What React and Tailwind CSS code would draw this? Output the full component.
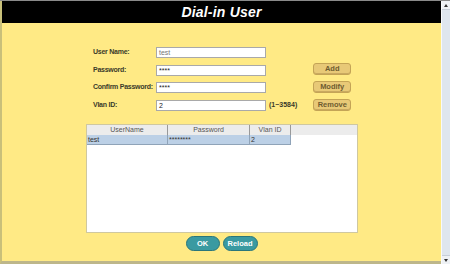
import React from "react";

const font = { fontFamily: '"Liberation Sans", Arial, sans-serif' };

function Field({ label, value, extra, gray }) {
  return (
    <div className="flex items-center h-[11px]">
      <div className="w-[63px] text-[7px] font-bold text-[#3a3a2a] whitespace-nowrap tracking-[-0.25px]">{label}</div>
      <div className={`w-[110px] h-[11px] bg-white border border-[#a9a9a9] px-[2px] text-[7px] leading-[9px] ${gray ? "text-[#777]" : "text-[#222]"}`}>
        {value}
      </div>
      {extra && <div className="ml-[3px] text-[7px] font-bold text-[#3a3a2a]">{extra}</div>}
    </div>
  );
}

function TanButton({ children }) {
  return (
    <button className="w-[38px] h-[12px] rounded-[3px] bg-[#e8c977] border border-[#c4a456] shadow-[inset_0_-1px_0_#c9a960] text-[7.5px] font-bold text-[#6e5c30] leading-[10px]">
      {children}
    </button>
  );
}

function TealButton({ children, w }) {
  return (
    <button className={`${w} h-[15px] rounded-full bg-[#3a9aa1] border border-[#2a767b] text-white text-[7.5px] font-bold leading-[13px]`}>
      {children}
    </button>
  );
}

export default function App() {
  return (
    <div className="w-[450px] h-[264px] flex bg-[#ffea85] border-t border-[#8a8a8a] overflow-hidden" style={font}>
      <div className="flex-1 flex flex-col border-l-2 border-[#c9c07a] border-b-[3px] border-b-[#bdb68a]">
        <div className="h-[22px] bg-black flex items-center justify-center">
          <h1 className="text-white text-[14px] font-bold italic tracking-[0.2px]">Dial-in User</h1>
        </div>

        <div className="flex pl-[91px] pt-[24px]">
          <div className="flex flex-col gap-[6.5px]">
            <Field label="User Name:" value="test" gray />
            <Field label="Password:" value="****" />
            <Field label="Confirm Password:" value="****" />
            <Field label="Vlan ID:" value="2" extra="(1~3584)" />
          </div>
          <div className="flex flex-col gap-[6px] ml-[16px] mt-[16px]">
            <TanButton>Add</TanButton>
            <TanButton>Modify</TanButton>
            <TanButton>Remove</TanButton>
          </div>
        </div>

        <div className="ml-[84px] mt-[13px] w-[272px] h-[109px] bg-white border border-[#cfc8a0]">
          <div className="flex h-[10px] bg-[#ececec] text-[7px] text-[#555] leading-[9px]">
            <div className="w-[81px] text-center border-r border-[#999]">UserName</div>
            <div className="w-[82px] text-center border-r border-[#999]">Password</div>
            <div className="w-[41px] text-center border-r border-[#999]">Vlan ID</div>
          </div>
          <div className="flex h-[10px] text-[7px] text-[#333] leading-[9px]">
            <div className="w-[81px] bg-[#bcd0e6] border-r border-b border-[#8fa3b8] pl-px">test</div>
            <div className="w-[82px] bg-[#bcd0e6] border-r border-b border-[#8fa3b8] pl-px">********</div>
            <div className="w-[41px] bg-[#bcd0e6] border-r border-b border-[#8fa3b8] pl-px">2</div>
          </div>
        </div>

        <div className="flex justify-center gap-[3px] mt-[3px]">
          <TealButton w="w-[34px]">OK</TealButton>
          <TealButton w="w-[35px]">Reload</TealButton>
        </div>
      </div>

      <div className="w-[9px] flex flex-col bg-[#dfe6ee] border-l border-[#f7f9fb]">
        <div className="h-[9px] flex items-center justify-center bg-[#eef1f5] border-b border-[#c7ced8]">
          <div className="w-0 h-0 border-l-[2.5px] border-r-[2.5px] border-b-[3px] border-l-transparent border-r-transparent border-b-[#333]" />
        </div>
        <div className="flex-1" />
        <div className="h-[9px] flex items-center justify-center bg-[#eef1f5] border-t border-[#c7ced8]">
          <div className="w-0 h-0 border-l-[2.5px] border-r-[2.5px] border-t-[3px] border-l-transparent border-r-transparent border-t-[#333]" />
        </div>
      </div>
    </div>
  );
}
